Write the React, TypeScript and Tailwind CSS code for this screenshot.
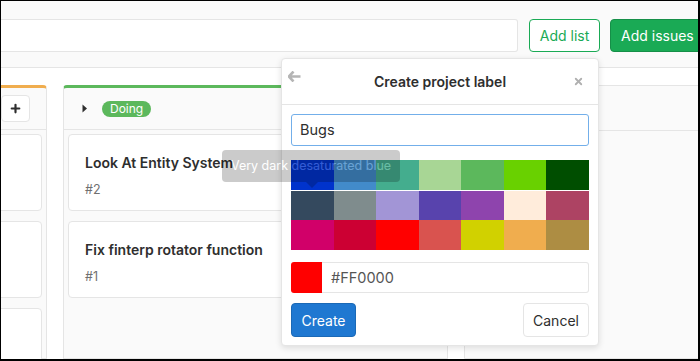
import { Plus, X } from 'lucide-react'

const swatches = [
  ['#0033CC', '#428BCA', '#44AD8E', '#A8D695', '#5CB85C', '#69D100', '#004E00'],
  ['#34495E', '#7F8C8D', '#A295D6', '#5843AD', '#8E44AD', '#FFECDB', '#AD4363'],
  ['#D10069', '#CC0033', '#FF0000', '#D9534F', '#D1D100', '#F0AD4E', '#AD8D43'],
]

const font = { fontFamily: 'Inter, "Liberation Sans", sans-serif' }

function Card({ title, num }: { title?: string; num?: string }) {
  return (
    <div className="h-[77px] shrink-0 bg-white border border-[#e5e5e5] rounded-[4px] px-[16px] pt-[18px]">
      {title && <div className="text-[14px] leading-[20px] font-semibold text-[#2e2e2e] whitespace-nowrap">{title}</div>}
      {num && <div className="mt-[8px] text-[12.5px] leading-[18px] text-[#707070]">{num}</div>}
    </div>
  )
}

function ColorGrid() {
  return (
    <div className="mt-[14px] flex flex-col">
      {swatches.map((row, i) => (
        <div key={i} className={`grid grid-cols-7 h-[30px] ${i === 1 ? 'border-t border-white/70' : ''}`}>
          {row.map(c => (
            <div key={c} style={{ backgroundColor: c }} />
          ))}
        </div>
      ))}
    </div>
  )
}

export default function App() {
  return (
    <div
      className="relative w-[700px] h-[361px] overflow-hidden bg-white border-t border-l border-r-2 border-b-2 border-black flex flex-col"
      style={font}
    >
      {/* filter bar */}
      <div className="shrink-0 bg-[#fafafa] border-b border-[#e5e5e5] pt-[18px] pb-[15px] flex items-center">
        <div className="w-[517px] h-[33px] shrink-0 bg-white border-y border-r border-[#e5e5e5] rounded-r-[3px]" />
        <button className="ml-[11px] w-[71px] h-[33px] shrink-0 bg-white border border-[#1aaa55] rounded-[4px] text-[#1aaa55] text-[14px]">
          Add list
        </button>
        <button className="ml-[10px] w-[92px] h-[33px] shrink-0 bg-[#1aaa55] border border-[#168f48] rounded-[4px] text-white text-[14px] text-left pl-[10px]">
          Add issues
        </button>
      </div>

      {/* board */}
      <div className="flex-1 min-h-0 pt-[17px] flex gap-[16px] ml-[-339px]">
        <div className="w-[385px] shrink-0 h-full bg-[#fafafa] border border-[#e5e5e5] border-t-[3px] border-t-[#f0ad4e] rounded-t-[4px] flex flex-col">
          <div className="h-[42px] shrink-0 border-b border-[#e5e5e5] flex items-center justify-end pr-[16px]">
            <div className="w-[29px] h-[27px] bg-white border border-[#e5e5e5] rounded-[4px] flex items-center justify-center">
              <Plus size={13} strokeWidth={4} className="text-[#2e2e2e]" />
            </div>
          </div>
          <div className="flex flex-col gap-[10px] px-[4px] pt-[4px]">
            <Card />
            <Card />
            <Card />
          </div>
        </div>

        <div className="w-[385px] shrink-0 h-full bg-[#fafafa] border border-[#e5e5e5] border-t-[3px] border-t-[#5cb85c] rounded-t-[4px] flex flex-col">
          <div className="h-[42px] shrink-0 border-b border-[#e5e5e5] flex items-center pl-[18px]">
            <svg width="6" height="9" viewBox="0 0 6 9" className="mr-[14px]">
              <path d="M0.5 0.5 L5 4.5 L0.5 8.5 Z" fill="#2e2e2e" />
            </svg>
            <span className="h-[16px] px-[8px] rounded-full bg-[#5cb85c] text-white text-[12px] leading-[16px]">Doing</span>
          </div>
          <div className="flex flex-col gap-[10px] px-[4px] pt-[4px]">
            <Card title="Look At Entity System" num="#2" />
            <Card title="Fix finterp rotator function" num="#1" />
          </div>
        </div>

        <div className="w-[385px] shrink-0 h-full bg-[#fafafa] border border-[#e5e5e5] rounded-t-[4px] flex flex-col">
          <div className="h-[45px] shrink-0 border-b border-[#e5e5e5]" />
        </div>
      </div>

      {/* create label dropdown */}
      <div className="absolute left-[280px] top-[57px] w-[318px] bg-white border border-[#e5e5e5] rounded-[4px] shadow-[0_2px_6px_rgba(0,0,0,0.12)] pb-[8px]">
        <div className="relative h-[46px] border-b border-[#e5e5e5] flex items-center justify-center">
          <svg width="13" height="11" viewBox="0 0 13 11" className="absolute left-[6px] top-[12px]">
            <path d="M5.5 0.5 L0.8 5.5 L5.5 10.5 M1.2 5.5 H12.5" stroke="#b5b5b5" strokeWidth="2.6" fill="none" strokeLinejoin="round" />
          </svg>
          <span className="text-[14px] font-semibold text-[#2e2e2e]">Create project label</span>
          <X size={11} strokeWidth={4} className="absolute right-[14px] top-[17px] text-[#b0b0b0]" />
        </div>
        <div className="px-[9px]">
          <div className="mt-[9px] h-[32px] border border-[#73afea] rounded-[3px] flex items-center pl-[8px] text-[14.5px] text-[#2e2e2e]">
            Bugs
          </div>
          <ColorGrid />
          <div className="mt-[12px] h-[31px] flex">
            <div className="w-[31px] h-full bg-[#FF0000] rounded-l-[3px]" />
            <div className="flex-1 h-full border border-l-0 border-[#e5e5e5] rounded-r-[3px] flex items-center pl-[9px] text-[14.5px] text-[#555]">
              #FF0000
            </div>
          </div>
          <div className="mt-[10px] flex justify-between">
            <button className="w-[65px] h-[34px] bg-[#1f78d1] border border-[#1b69b6] rounded-[4px] text-white text-[14px]">
              Create
            </button>
            <button className="w-[66px] h-[34px] bg-white border border-[#e5e5e5] rounded-[4px] text-[#2e2e2e] text-[14px]">
              Cancel
            </button>
          </div>
        </div>
      </div>

      {/* tooltip */}
      <div className="absolute left-[221px] top-[149px] opacity-20 pointer-events-none">
        <div className="w-[178px] h-[32px] bg-black rounded-[4px] text-white text-[12.5px] flex items-center justify-center">
          Very dark desaturated blue
        </div>
        <div className="ml-[84px] w-0 h-0 border-x-[6px] border-x-transparent border-t-[6px] border-t-black" />
      </div>
    </div>
  )
}
